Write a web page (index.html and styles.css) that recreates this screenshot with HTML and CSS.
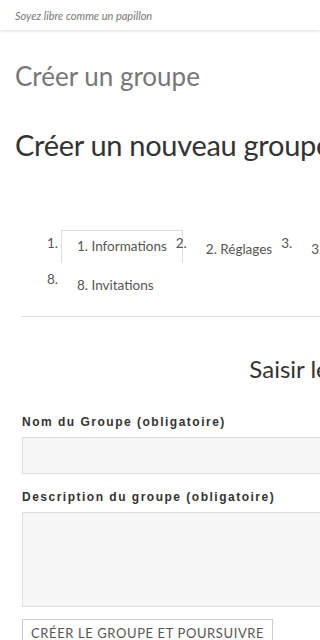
FILE: index.html
```html
<!DOCTYPE html>
<html lang="fr">
<head>
  <meta charset="UTF-8">
  <meta name="viewport" content="width=device-width, initial-scale=1.0">
  <title>Créer un groupe</title>
  <link rel="stylesheet" href="styles.css">
</head>
<body>

  <header class="site-header">
    <p class="tagline">Soyez libre comme un papillon</p>
  </header>

  <main class="page">
    <h1 class="page-title">Créer un groupe</h1>
    <h2 class="entry-title">Créer un nouveau groupe</h2>

    <div class="group-create">
      <ol class="steps">
        <li class="step active"><span class="num">1.</span><a href="#">1. Informations</a></li>
        <li class="step"><span class="num">2.</span><a href="#">2. Réglages</a></li>
        <li class="step"><span class="num">3.</span><a href="#">3. Photo</a></li>
        <li class="step"><span class="num">4.</span><a href="#">4. Couverture</a></li>
        <li class="step"><span class="num">5.</span><a href="#">5. Forum</a></li>
        <li class="step"><span class="num">6.</span><a href="#">6. Documents</a></li>
        <li class="step break"><span class="num">8.</span><a href="#">8. Invitations</a></li>
      </ol>

      <form class="group-form">
        <h3 class="form-title">Saisir les détails du groupe</h3>

        <label for="group-name">Nom du Groupe (obligatoire)</label>
        <input type="text" id="group-name" name="group-name">

        <label for="group-desc">Description du groupe (obligatoire)</label>
        <textarea id="group-desc" name="group-desc"></textarea>

        <button type="submit" class="btn">Créer le groupe et poursuivre</button>
      </form>
    </div>
  </main>

</body>
</html>
```

FILE: styles.css
```css
body {
  margin: 0;
  font-family: 'Lato', 'Open Sans', sans-serif;
  background: #fff;
  color: #333;
  overflow-x: hidden;
}

.site-header {
  height: 30px;
  background: #fff;
  box-shadow: 0 1px 3px rgba(0, 0, 0, 0.15);
  display: flex;
  align-items: center;
  padding: 0 15px;
}

.tagline {
  margin: 0;
  font-size: 11px;
  font-style: italic;
  color: #777;
}

.page {
  padding: 0 15px;
  width: 760px;
}

.page-title {
  margin: 28px 0 0;
  font-size: 26px;
  font-weight: 400;
  line-height: 36px;
  color: #777;
}

.entry-title {
  margin: 31px 0 0;
  font-size: 29px;
  font-weight: 400;
  line-height: 40px;
  letter-spacing: -0.3px;
  color: #333;
}

.group-create {
  margin: 0 7px;
  width: 732px;
}

.steps {
  list-style: none;
  margin: 68px 0 0;
  padding: 0 0 11px 25px;
  display: flex;
  flex-wrap: wrap;
  border-bottom: 1px solid #ddd;
}

.step {
  display: flex;
  align-items: flex-start;
  margin: 0 -7px 6px 0;
  font-size: 13.5px;
}

.step.break {
  flex-basis: 100%;
}

.num {
  line-height: 20px;
  color: #555;
  margin-right: 3px;
}

.step a {
  display: block;
  padding: 5px 15px 4px;
  line-height: 20px;
  color: #555;
  text-decoration: none;
  border: 1px solid transparent;
  border-bottom: 0;
}

.step.active a {
  border-color: #ddd;
  margin-top: -3px;
  padding-bottom: 7px;
}

.group-form {
  display: flex;
  flex-direction: column;
  align-items: flex-start;
}

.form-title {
  align-self: stretch;
  text-align: center;
  margin: 37px 0 31px;
  font-size: 24px;
  font-weight: 400;
  line-height: 30px;
  color: #333;
}

label {
  font-family: 'Liberation Sans', Arial, sans-serif;
  font-size: 12px;
  font-weight: bold;
  letter-spacing: 1.5px;
  color: #333;
  line-height: 14px;
  margin-bottom: 8px;
}

input,
textarea {
  box-sizing: border-box;
  width: 100%;
  background: #f7f7f7;
  border: 1px solid #ddd;
  font-family: inherit;
  font-size: 14px;
  padding: 8px;
  margin: 0;
}

input {
  height: 37px;
  margin-bottom: 16px;
}

textarea {
  height: 95px;
  resize: none;
  margin-bottom: 12px;
}

.btn {
  background: #fff;
  border: 1px solid #ccc;
  font-family: 'Lato', sans-serif;
  font-size: 13px;
  letter-spacing: 0.6px;
  text-transform: uppercase;
  color: #555;
  padding: 3px 8px;
  line-height: 20px;
}
```
